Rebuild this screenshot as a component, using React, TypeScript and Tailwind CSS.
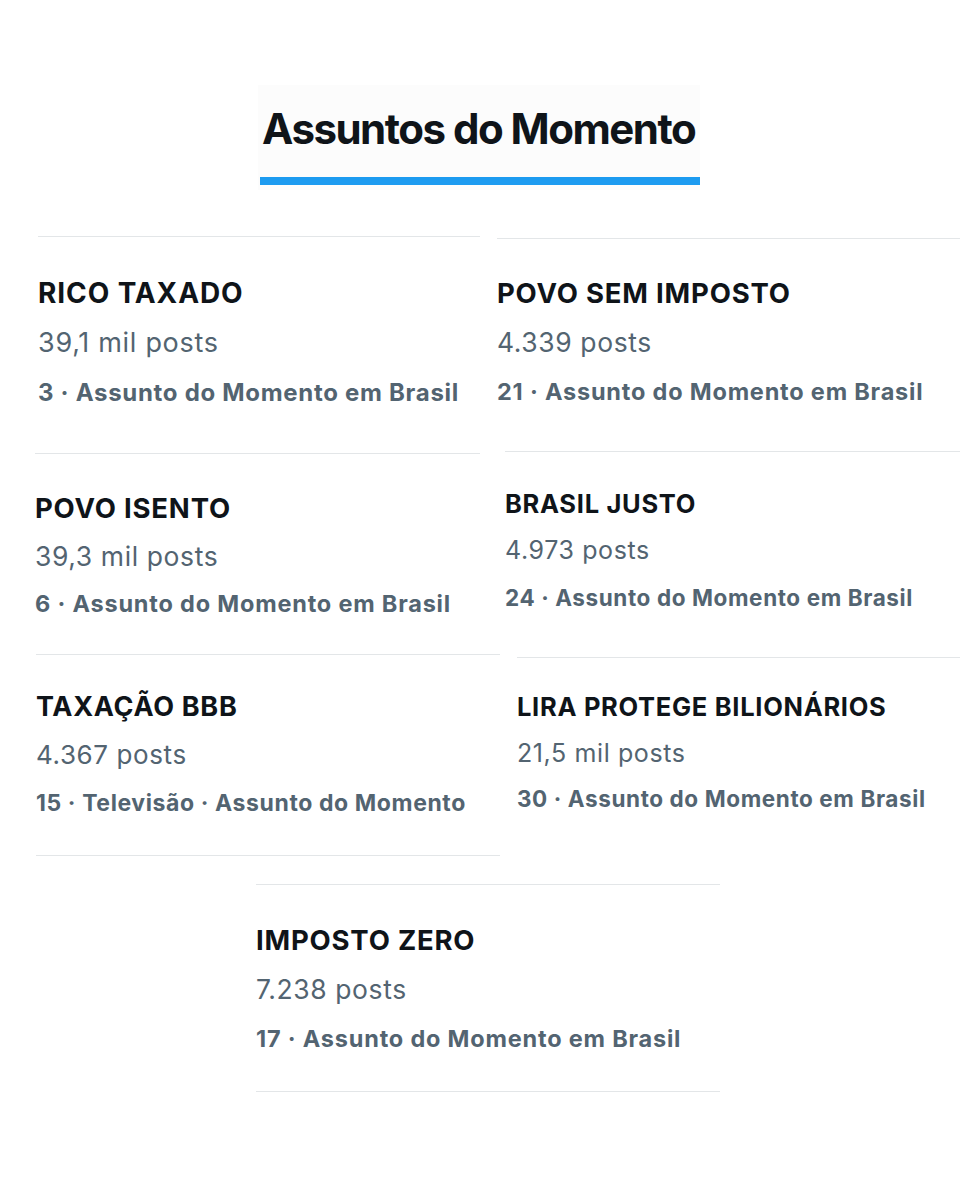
type Size = { title: string; posts: string; meta: string };

// each pasted card is a slightly different scale in the original
const LG: Size = {
  title: "text-[28px] tracking-[0.9px]",
  posts: "text-[27px] tracking-[0.7px]",
  meta: "text-[24px] tracking-[0.7px]",
};
const MD: Size = {
  title: "text-[27.5px] tracking-[0.8px]",
  posts: "text-[26.5px] tracking-[0.6px]",
  meta: "text-[23.5px] tracking-[0.8px]",
};
const SM: Size = {
  title: "text-[27px] tracking-[0.7px]",
  posts: "text-[26px] tracking-[0.6px]",
  meta: "text-[23px] tracking-[0.6px]",
};
const XS: Size = {
  title: "text-[25.5px] tracking-[0.7px]",
  posts: "text-[25px] tracking-[0.6px]",
  meta: "text-[22.5px] tracking-[0.6px]",
};

type Trend = {
  title: string;
  posts: string;
  meta: string;
  box: string;
  inner: string;
  size: Size;
};

const LEFT: Trend[] = [
  {
    title: "RICO TAXADO",
    posts: "39,1 mil posts",
    meta: "3 · Assunto do Momento em Brasil",
    box: "ml-[18px] w-[442px]",
    inner: "pt-[31px] pb-[35px] leading-[50px]",
    size: LG,
  },
  {
    title: "POVO ISENTO",
    posts: "39,3 mil posts",
    meta: "6 · Assunto do Momento em Brasil",
    box: "ml-[15px] w-[445px]",
    inner: "pt-[30px] pb-[26px] leading-[48px]",
    size: MD,
  },
  {
    title: "TAXAÇÃO BBB",
    posts: "4.367 posts",
    meta: "15 · Televisão · Assunto do Momento",
    box: "ml-[16px] w-[464px] border-b",
    inner: "pt-[28px] pb-[28px] leading-[48px]",
    size: SM,
  },
];

const RIGHT: Trend[] = [
  {
    title: "POVO SEM IMPOSTO",
    posts: "4.339 posts",
    meta: "21 · Assunto do Momento em Brasil",
    box: "ml-[17px] w-[463px]",
    inner: "pt-[30px] pb-[35px] leading-[49px]",
    size: MD,
  },
  {
    title: "BRASIL JUSTO",
    posts: "4.973 posts",
    meta: "24 · Assunto do Momento em Brasil",
    box: "ml-[25px] w-[455px]",
    inner: "pt-[28px] pb-[36px] leading-[47px]",
    size: XS,
  },
  {
    title: "LIRA PROTEGE BILIONÁRIOS",
    posts: "21,5 mil posts",
    meta: "30 · Assunto do Momento em Brasil",
    box: "ml-[37px] w-[443px]",
    inner: "pt-[26px] pb-[30px] leading-[46px]",
    size: XS,
  },
];

const LAST: Trend = {
  title: "IMPOSTO ZERO",
  posts: "7.238 posts",
  meta: "17 · Assunto do Momento em Brasil",
  box: "ml-[256px] w-[464px] border-b",
  inner: "pt-[31px] pb-[28px] leading-[49px]",
  size: MD,
};

function TrendCard({ t }: { t: Trend }) {
  return (
    <div className={`border-t border-[#e3e6e8] ${t.box}`}>
      <div className={t.inner}>
        <div className={`${t.size.title} font-bold text-[#0f1419] whitespace-nowrap`}>{t.title}</div>
        <div className={`${t.size.posts} text-[#536471] whitespace-nowrap`}>{t.posts}</div>
        <div className={`${t.size.meta} font-bold text-[#536471] whitespace-nowrap`}>{t.meta}</div>
      </div>
    </div>
  );
}

export default function App() {
  return (
    <div className="w-[960px] h-[1200px] bg-white font-['Inter',sans-serif] overflow-hidden">
      {/* Header */}
      <div className="ml-[258px] mt-[85px] w-[442px] bg-[#fcfcfc] pt-[18px] pb-[5px]">
        <h1 className="pl-[4px] text-[42px] leading-[52px] font-bold text-[#0f1419] tracking-[-1.5px] whitespace-nowrap">
          Assuntos do Momento
        </h1>
        <div className="mt-[22px] ml-[2px] h-[8px] w-[440px] bg-[#1d9bf0]" />
      </div>

      {/* Trend cards */}
      <div className="mt-[46px] flex items-start">
        <div className="w-[480px] pl-[20px] flex flex-col">
          {LEFT.map((t) => (
            <TrendCard key={t.title} t={t} />
          ))}
        </div>
        <div className="w-[480px] pt-[2px] flex flex-col">
          {RIGHT.map((t) => (
            <TrendCard key={t.title} t={t} />
          ))}
        </div>
      </div>

      <div className="mt-[28px]">
        <TrendCard t={LAST} />
      </div>
    </div>
  );
}
